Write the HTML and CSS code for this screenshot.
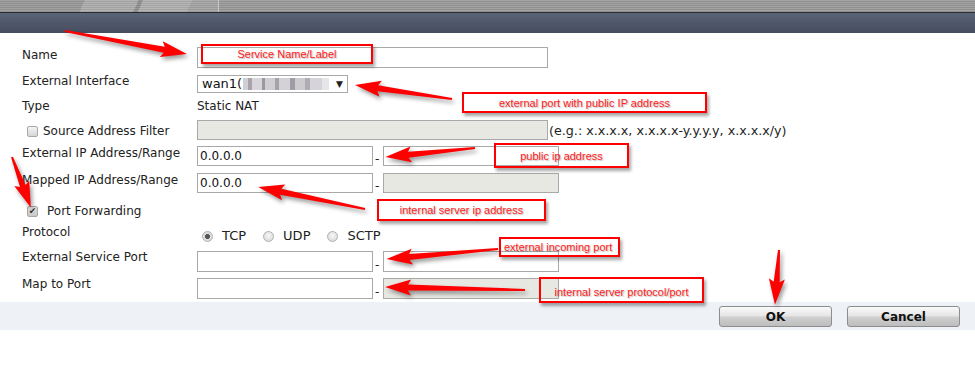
FILE: index.html
```html
<!DOCTYPE html>
<html>
<head>
<meta charset="utf-8">
<link rel="stylesheet" href="styles.css">
</head>
<body>
<div class="page">
  <div class="topbar"><div class="topbar-left"></div></div>
  <div class="titlebar"></div>
  <form class="form">
    <div class="row r-name">
      <label class="label">Name</label>
      <input class="field wide" type="text">
    </div>
    <div class="row r-iface">
      <label class="label">External Interface</label>
      <div class="select"><span class="sel-text">wan1(</span><span class="blur"></span><span class="caret">▼</span></div>
    </div>
    <div class="row r-type">
      <label class="label">Type</label>
      <span class="value">Static NAT</span>
    </div>
    <div class="row r-src">
      <label class="label"><span class="check"></span>Source Address Filter</label>
      <input class="field wide disabled" type="text" disabled>
      <span class="hint">(e.g.: x.x.x.x, x.x.x.x-y.y.y.y, x.x.x.x/y)</span>
    </div>
    <div class="row r-extip">
      <label class="label">External IP Address/Range</label>
      <div class="range">
        <input class="field half" type="text" value="0.0.0.0">
        <span class="dash">-</span>
        <input class="field half2" type="text">
      </div>
    </div>
    <div class="row r-map">
      <label class="label">Mapped IP Address/Range</label>
      <div class="range">
        <input class="field half" type="text" value="0.0.0.0">
        <span class="dash">-</span>
        <input class="field half2 disabled" type="text" disabled>
      </div>
    </div>
    <div class="row r-pf">
      <label class="label pf"><span class="check checked">✔</span>Port Forwarding</label>
    </div>
    <div class="row r-proto">
      <label class="label">Protocol</label>
      <div class="radios">
        <span class="radio on"></span><span class="rtext">TCP</span>
        <span class="radio"></span><span class="rtext">UDP</span>
        <span class="radio"></span><span class="rtext">SCTP</span>
      </div>
    </div>
    <div class="row r-esp">
      <label class="label">External Service Port</label>
      <div class="range">
        <input class="field half" type="text">
        <span class="dash">-</span>
        <input class="field half2" type="text">
      </div>
    </div>
    <div class="row r-mtp">
      <label class="label">Map to Port</label>
      <div class="range">
        <input class="field half" type="text">
        <span class="dash">-</span>
        <input class="field half2 disabled" type="text" disabled>
      </div>
    </div>
    <div class="footer">
      <button type="button" class="btn">OK</button>
      <button type="button" class="btn">Cancel</button>
    </div>
  </form>

  <div class="notes">
    <div class="note n1">Service Name/Label</div>
    <div class="note n2">external port with public IP address</div>
    <div class="note n3">public ip address</div>
    <div class="note n4">internal server ip address</div>
    <div class="note n5">external incoming port</div>
    <div class="note n6">internal server protocol/port</div>
    <svg class="arrows" width="975" height="373" viewBox="0 0 975 373">
      <g fill="#ff0000">
        <g transform="translate(65,31) rotate(10.7)"><polygon points="0,-1 101,-3 98,-8 124,0 98,8 101,3 0,1"/></g>
        <g transform="translate(452,99) rotate(188.2)"><polygon points="0,-1 75,-3 72,-8 98,0 72,8 75,3 0,1"/></g>
        <g transform="translate(475,148) rotate(174.3)"><polygon points="0,-1 67,-3 64,-8 90,0 64,8 67,3 0,1"/></g>
        <g transform="translate(365,209) rotate(191.6)"><polygon points="0,-1 86,-3 83,-8 109,0 83,8 86,3 0,1"/></g>
        <g transform="translate(498,249) rotate(174.9)"><polygon points="0,-1 89,-3 86,-8 112,0 86,8 89,3 0,1"/></g>
        <g transform="translate(525,290) rotate(181.2)"><polygon points="0,-1 117,-3 114,-8 140,0 114,8 117,3 0,1"/></g>
        <g transform="translate(12,157) rotate(69.6)"><polygon points="0,-1 31,-3 28,-8 54,0 28,8 31,3 0,1"/></g>
        <g transform="translate(779,250) rotate(94.2)"><polygon points="0,-1 32,-3 29,-8 55,0 29,8 32,3 0,1"/></g>
      </g>
    </svg>
  </div>
</div>
</body>
</html>
```

FILE: styles.css
```css
* { box-sizing: border-box; }
html, body { margin: 0; padding: 0; background: #fff; }
body { font-family: "DejaVu Sans", Verdana, sans-serif; font-size: 12px; color: #222; }
.page { position: relative; width: 975px; height: 373px; overflow: hidden; }

.topbar {
  height: 13px;
  border-bottom: 1px solid #2b2b2b;
  background: repeating-linear-gradient(180deg, #a4a4a4 0 1px, #8e8e8e 1px 2px);
}
.topbar-left {
  width: 219px;
  height: 12px;
  border-right: 1px solid #c8c8c8;
  background:
    linear-gradient(115deg, rgba(255,255,255,0) 0 38%, rgba(255,255,255,.18) 38% 62%, rgba(0,0,0,.06) 62% 64%, rgba(255,255,255,.2) 64% 86%, rgba(255,255,255,.1) 86% 100%),
    repeating-linear-gradient(180deg, #a2a2a2 0 1px, #8e8e8e 1px 2px);
}
.titlebar {
  height: 20px;
  background: linear-gradient(180deg, #5b6479 0%, #4f576a 50%, #464d5d 100%);
}

.form { padding-top: 14px; }
.row { display: flex; align-items: flex-start; padding-left: 22px; }
.label { width: 175px; flex: none; line-height: 16px; display: flex; align-items: center; }
.value { line-height: 16px; }

.field {
  height: 21px;
  border: 1px solid #a9a9a9;
  background: #fff;
  padding: 0 2px;
  font-family: "DejaVu Sans", Verdana, sans-serif;
  font-size: 12px;
  color: #111;
  margin: 0;
  outline: none;
}
.field.disabled { background: #e8e8e3; }
.wide { width: 351px; }
.half { width: 176px; }
.half2 { width: 176px; }
.range { display: flex; align-items: flex-end; }
.dash { width: 10px; padding-left: 2px; line-height: 14px; }

.r-name { margin-top: 0; }
.r-iface { margin-top: 5px; height: 20px; }
.r-iface .select { margin-top: 2px; }
.select {
  width: 151px; height: 18px;
  border: 1px solid #a9a9a9;
  display: flex; align-items: center;
  padding-left: 4px;
  font-size: 13px;
  color: #111;
}
.sel-text { line-height: 16px; }
.blur {
  width: 86px; height: 12px; margin-left: 1px;
  background: linear-gradient(90deg, #d0d0d4 0 6%, #a8a4ac 6% 10%, #d8d6da 10% 22%, #9c98a0 22% 26%, #cfcfd2 26% 37%, #a6a2aa 37% 42%, #d4d2d6 42% 55%, #a09ca6 55% 60%, #cccbd0 60% 72%, #b0acb4 72% 78%, #d6d4d8 78% 92%, #e6e6e8 92% 100%);
  filter: blur(0.7px);
}
.caret { margin-left: auto; margin-right: 4px; font-size: 9px; color: #222; }

.r-type { margin-top: 5px; }
.r-src { margin-top: 6px; height: 20px; }
.r-src .label { margin-top: 3px; margin-left: 5px; width: 170px; }
.r-src .field { height: 20px; }
.hint { line-height: 16px; margin-top: 3px; padding-left: 1px; color: #222; font-size: 12.7px; }

.check {
  width: 11px; height: 11px; flex: none;
  border: 1px solid #a8a8a8; border-radius: 2px;
  background: linear-gradient(180deg, #f4f4f4, #d6d6d6);
  margin-right: 5px;
  display: inline-flex; align-items: center; justify-content: center;
  font-size: 9px; line-height: 9px; color: #333;
}
.check.checked { background: linear-gradient(180deg, #e4e4e4, #c8c8c8); }

.r-extip { margin-top: 5px; }
.r-extip .range { margin-top: 1px; }
.r-extip .field { height: 20px; }
.r-map { margin-top: 6px; }
.r-map .range { margin-top: 1px; }
.r-map .field { height: 20px; }
.r-pf { margin-top: 8px; }
.label.pf { padding-left: 5px; margin-top: 2px; }
.label.pf .check { margin-right: 9px; }

.r-proto { margin-top: 5px; height: 20px; }
.radios { display: flex; align-items: center; margin-top: 4px; padding-left: 5px; }
.radio {
  width: 11px; height: 11px; border-radius: 50%;
  border: 1px solid #b0b0b0;
  background: radial-gradient(circle at 50% 40%, #f6f6f6, #d4d4d4);
  display: inline-block;
}
.radio.on { background: radial-gradient(circle, #555 0 2.2px, #ddd 2.6px 100%); }
.rtext { margin-left: 9px; margin-right: 17px; font-size: 13px; color: #222; line-height: 16px; }

.r-esp { margin-top: 5px; }
.r-esp .range { margin-top: 2px; }
.r-mtp { margin-top: 4px; }
.r-mtp .range { margin-top: 2px; }

.footer {
  margin-top: 3px;
  height: 28px;
  background: #eef2f6;
  display: flex; justify-content: flex-end;
  padding: 4px 15px 0 0;
  gap: 15px;
}
.btn {
  width: 113px; height: 21px;
  border: 1px solid #8d8d8d; border-radius: 3px;
  background: linear-gradient(180deg, #fafafa 0%, #e6e6e6 45%, #cfcfcf 55%, #bdbdbd 100%);
  font-family: "DejaVu Sans", Verdana, sans-serif;
  font-weight: bold; font-size: 12px; color: #111;
  padding: 0;
}

.notes { position: absolute; left: 0; top: 0; width: 975px; height: 373px; pointer-events: none; }
.note {
  position: absolute;
  border: 2px solid #f00;
  box-shadow: 2px 3px 3px rgba(0,0,0,.35);
  color: #ff2020;
  font-family: "Liberation Sans", Arial, sans-serif;
  font-size: 11px;
  display: flex; align-items: center; justify-content: center;
  text-shadow: 1px 1px 1px rgba(0,0,0,.25);
}
.n1 { left: 201px; top: 44px; width: 172px; height: 20px; }
.n2 { left: 462px; top: 92px; width: 245px; height: 21px; }
.n3 { left: 494px; top: 143px; width: 135px; height: 25px; }
.n4 { left: 377px; top: 199px; width: 169px; height: 22px; }
.n5 { left: 499px; top: 237px; width: 121px; height: 20px; justify-content: flex-start; padding-left: 3px; }
.n6 { left: 539px; top: 277px; width: 165px; height: 26px; padding-top: 4px; }
.arrows { position: absolute; left: 0; top: 0; filter: drop-shadow(2px 3px 2px rgba(0,0,0,.4)); }
```
